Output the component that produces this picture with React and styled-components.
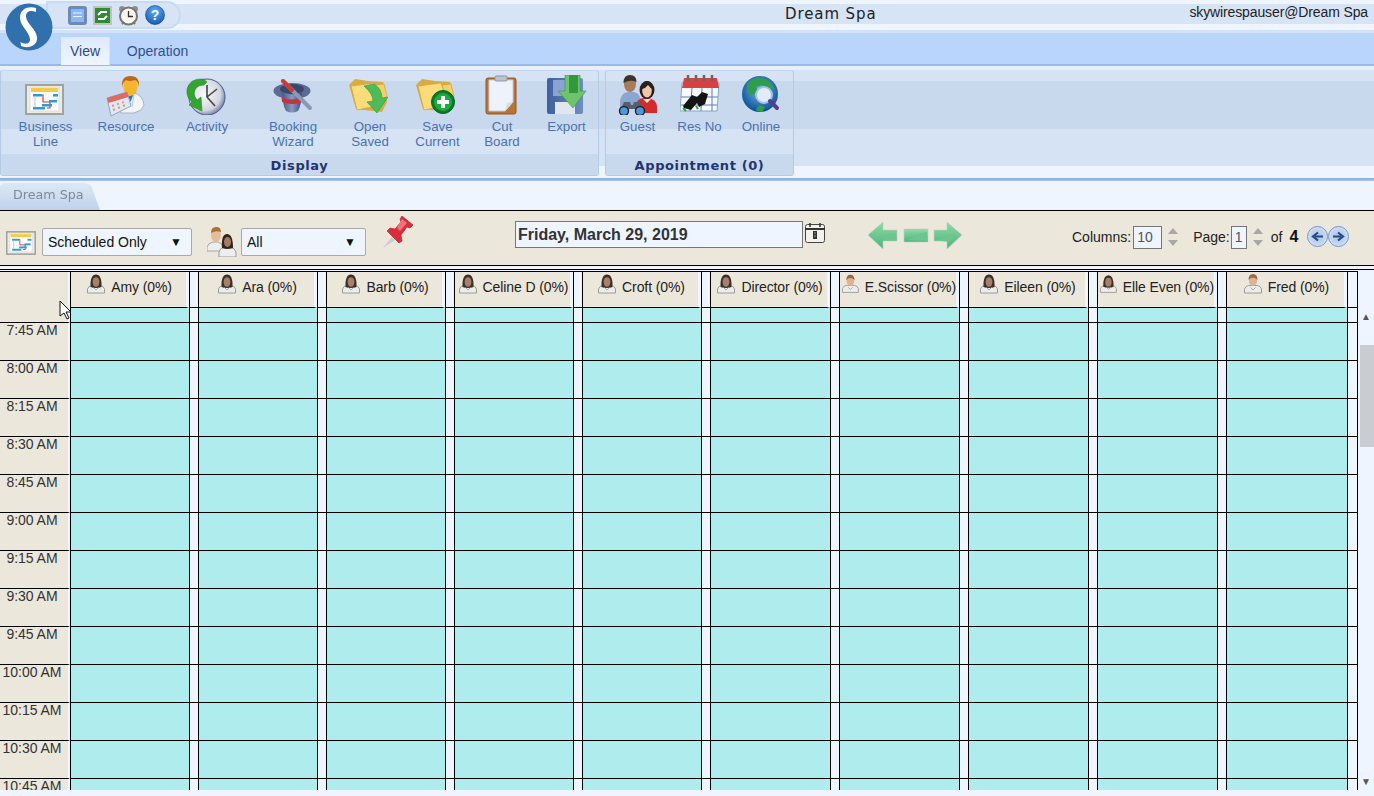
import React from "react";
import styled, { createGlobalStyle } from "styled-components";

const Global = createGlobalStyle`
  html, body { margin: 0; padding: 0; background: #eef5fe; }
  * { box-sizing: border-box; }
`;

const Page = styled.div`
  position: relative; width: 1374px; height: 796px; overflow: hidden;
  background: #eef5fe; font-family: "Liberation Sans", Arial, sans-serif; color: #222;
`;
const TitleBar = styled.div`
  height: 33px; position: relative; display: flex; align-items: center; justify-content: flex-end;
  background: linear-gradient(#eef5fe 0 4px, #d6e4f6 4px 24px, #eef5fe 24px 30px, #d3e2f8 30px 33px);
`;
const LogoMark = styled.div`position: absolute; left: 5px; top: 3px; width: 48px; height: 48px; z-index: 3;`;
const QuickBar = styled.div`
  position: absolute; left: 46px; top: 1px; width: 135px; height: 28px; padding-left: 20px;
  display: flex; align-items: center; gap: 6px;
  background: #d6e4f6; border: 2px solid #c9dbf3; border-radius: 0 14px 14px 0;
`;
const AppTitle = styled.div`
  position: absolute; left: 785px; top: 5px; font: 15px "DejaVu Sans", sans-serif; letter-spacing: .9px; color: #222;
`;
const UserName = styled.div`font-size: 14px; letter-spacing: -.12px; padding: 0 6px 10px 0; color: #222;`;
const TabStrip = styled.div`
  height: 33px; padding-left: 61px; display: flex; align-items: flex-end;
  background: #bad5fb; border-bottom: 2px solid #9ab9e6;
`;
const MenuTab = styled.div`
  height: ${p => (p.$active ? "28px" : "26px")}; width: ${p => p.$w}px; margin-right: ${p => p.$gap || 0}px;
  margin-bottom: ${p => (p.$active ? "-1px" : "0")};
  display: flex; align-items: center; justify-content: center; font-size: 14px; color: ${p => (p.$active ? "#2f4a80" : "#33508a")};
  background: ${p => (p.$active ? "linear-gradient(#dfeafb, #eef5fe)" : "transparent")};
  border-right: ${p => (p.$active ? "1px solid #d4e3f8" : "none")};
`;
const Ribbon = styled.div`
  height: 112px; padding: 4px 0 0; display: flex; gap: 6px;
  background: linear-gradient(#e6effa 0 4px, #d5e3f5 4px 15px, #c9d9ed 15px 63px, #d5e3f5 63px 100px, #eef5fd 100px);
`;
const Group = styled.div`
  width: ${p => p.$w}px; height: 106px; display: flex; flex-direction: column;
  border: 1px solid #b4cae6; border-top-color: #c3d5ec; border-radius: 3px;
  background: linear-gradient(#d5e3f5 0 10px, #c9d9ed 10px 58px, #d5e3f5 58px);
`;
const GroupItems = styled.div`flex: 1; display: flex;`;
const GroupLabel = styled.div`
  height: 21px; background: #c8d8ed; color: #1f3572; text-align: center;
  font: bold 13px/23px "DejaVu Sans", sans-serif; letter-spacing: .6px;
`;
const RibbonItem = styled.div`
  width: ${p => p.$w}px; display: flex; flex-direction: column; align-items: center;
  font-size: 13.3px; line-height: 15px; color: #4a72ae; text-align: center;
`;
const ItemIcon = styled.div`height: 48px; padding-top: 4px;`;
const IconOffset = styled.div`padding: ${p => p.$t}px ${p => p.$shift || 0}px 0 0;`;
const BlueRule = styled.div`height: 3px; background: linear-gradient(#8aa9d8, #a9c3ea);`;
const DocStrip = styled.div`height: 29px; padding-top: 2px; background: #eef5fe; filter: drop-shadow(0 0 .7px #8296b4);`;
const DocTab = styled.div`
  width: 100px; height: 27px; padding: 4px 0 0 13px; font: 12.7px "DejaVu Sans", sans-serif; color: #7b8a9c;
  background: linear-gradient(#dde8f6, #bfd2ea);
  clip-path: polygon(0 8%, 4% 0, 86% 0, 91% 8%, 100% 100%, 0 100%);
`;
const Toolbar = styled.div`
  height: 56px; display: flex; align-items: flex-start; background: #ebe7da;
  border-top: 1px solid #000; border-bottom: 1px solid #000;
`;
const ToolSlot = styled.div`margin: ${p => p.$top}px 0 0 ${p => p.$left}px; display: flex;`;
const SelectBox = styled.div`
  width: ${p => p.$w}px; height: 28px; padding: 0 9px 0 5px; display: flex; align-items: center; justify-content: space-between;
  background: #eef5fe; border: 1px solid #a9a9a9; border-radius: 2px; font-size: 14px; color: #111;
`;
const Caret = styled.span`font-size: 12px; color: #111;`;
const DateBox = styled.div`
  width: 288px; height: 27px; padding: 0 2px; display: flex; align-items: center; background: #eef5fe;
  border: 1px solid #767676; font: bold 16px "Liberation Sans", sans-serif; color: #333;
`;
const PagerLabel = styled.span`font-size: 14px; color: #222; line-height: 24px;`;
const NumBox = styled.div`
  width: ${p => p.$w}px; height: 23px; padding-left: 3px; background: #eef5fe; border: 1px solid #767676;
  font-size: 14px; line-height: 21px; color: #555;
`;
const BoldCount = styled.span`font-size: 16px; font-weight: bold; color: #111; line-height: 24px;`;
const Rule = styled.div`height: 4px; background: #eef5fe; border-bottom: 1px solid #000;`;
const ScheduleArea = styled.div`display: flex; height: 520px; padding-top: 1px; background: #eef5fe;`;
const Grid = styled.div`
  width: 1358px; height: 519px; overflow: hidden; display: grid; border-top: 1px solid #000; border-right: 1px solid #000;
  grid-template-columns: 70px 119px 9px 119px 9px 119px 9px 119px 9px 119px 9px 120px 9px 120px 9px 120px 9px 120px 9px 121px 10px;
  grid-auto-rows: min-content;
`;
const TimeHead = styled.div`height: ${p => p.$h}px; background: #ebe7da; border-right: 2px solid #eef5fe; border-bottom: ${p => (p.$line ? "1px solid #000" : "0")};`;
const TimeCell = styled.div`
  height: 38px; padding: 0 4px 0 0; text-align: center; font-size: 14px; letter-spacing: -.05px; line-height: 15px; color: #333;
  background: #ebe7da; border-right: 2px solid #eef5fe; border-bottom: 1px solid #000;
`;
const Head = styled.div`
  height: 36px; padding-left: 2px; border-left: 1px solid #000; border-bottom: 1px solid #000; border-right: 3px solid #eef5fe;
  background: #ebe7da; display: flex; justify-content: center; gap: 6px; font-size: 14px; letter-spacing: -.1px;
  white-space: nowrap; color: #222; line-height: 30px;
`;
const Slot = styled.div`height: ${p => p.$h}px; background: #aeecee; border-left: 1px solid #000; border-bottom: 1px solid #000;`;
const Spacer = styled.div`height: ${p => p.$h}px; background: #eef5fe; border-left: 1px solid #000; border-bottom: 1px solid #000;`;
const Scrollbar = styled.div`width: 16px; height: 519px; display: flex; flex-direction: column; align-items: center; padding-top: 42px;`;
const ScrollArrow = styled.div`font-size: 10px; line-height: 8px; color: #555; height: 8px;`;
const Thumb = styled.div`width: 14px; height: 102px; margin: 24px 0 331px 1px; background: #c9cdd2;`;
const Cursor = styled.div`position: absolute; left: 59px; top: 300px; z-index: 5;`;

const Person = ({ female }) => (
  <svg width="18" height="20" viewBox="0 0 18 20" style={{ marginTop: 2 }}>
    <path d="M.5 19v-4q1-3 4-3.500h9q3 .5 4 3.500v4z" fill="#ececec" stroke="#9c9c9c" />
    {female ? (
      <>
        <path d="M3.500 13Q3 .5 9 .5T14.500 13q-2 1-5.500 1t-5.500-1z" fill="#3b302c" />
        <ellipse cx="9" cy="8" rx="3.400" ry="4.800" fill="#a97f66" />
      </>
    ) : (
      <>
        <ellipse cx="9" cy="7" rx="4" ry="5" fill="#dfb392" />
        <path d="M4.500 6q0-6 4.500-6t4.500 6q-2-2.500-4.500-2.500T4.500 6z" fill="#9a6a45" />
      </>
    )}
    <path d="M6.500 13.500L9 16l2.500-2.500" fill="none" stroke="#aaa" />
  </svg>
);

const BusinessIcon = ({ w = 39, h = 31 }) => (
  <svg width={w} height={h} viewBox="0 0 39 31">
    <rect x="1" y="1" width="37" height="29" fill="#ebebe6" stroke="#a2a29c" strokeWidth="2" />
    <rect x="5" y="4" width="29" height="23" fill="#fff" stroke="#ddd" />
    <rect x="6" y="4" width="27" height="4" fill="#f5cd45" />
    <path d="M8 11h10v7h7v6h-3" fill="none" stroke="#d63a2b" strokeWidth="1.200" />
    <rect x="8" y="10" width="9" height="2.500" fill="#2f9ad8" />
    <rect x="24" y="16" width="8" height="2.500" fill="#2f9ad8" />
    <rect x="28" y="10" width="5" height="2.500" fill="#2f9ad8" />
    <rect x="17" y="20" width="10" height="2.500" fill="#2f9ad8" />
    <rect x="8" y="23" width="12" height="2.500" fill="#2f9ad8" />
    <path d="M10 12v11" stroke="#b9c2cc" />
  </svg>
);
const ResourceIcon = () => (
  <svg width="40" height="42" viewBox="0 0 40 42">
    <path d="M10 30q2-10 11-12h7q9 2 10 12l-3 5-7 3H15z" fill="#f2f5f8" stroke="#a8b3c0" />
    <path d="M21 18l3.500 9 3.500-9z" fill="#2f6fb3" />
    <path d="M28 20l-2 12M21 20l-1 9" stroke="#b9c4d2" />
    <path d="M17.500 11q0-9 7-9t7 9q0 9-7 10t-7-10z" fill="#f4b52f" />
    <path d="M16 12q-1-11 8.500-11T33 12q-1-6-4-7-6 2-9 0-3 2-4 7z" fill="#bc661d" />
    <path d="M1 22l20-6 4 14-20 10z" fill="#dfe8f6" stroke="#8fa5c6" transform="translate(0 1)" />
    <path d="M1 23l20-6 1.500 5L2.500 28z" fill="#df6a5d" />
    <path d="M6 31l2-.7m3-1l2-.7m3-1l2-.7M7 35l2-.8m3-1.200l2-.8m3-1.200l2-.8" stroke="#e59a6a" strokeWidth="2" />
  </svg>
);
const ActivityIcon = () => (
  <svg width="40" height="37" viewBox="0 0 40 37">
    <defs>
      <radialGradient id="clk" cx=".42" cy=".42" r=".7"><stop offset="0" stopColor="#fafafa" /><stop offset=".65" stopColor="#d2d6df" /><stop offset="1" stopColor="#3f4e80" /></radialGradient>
    </defs>
    <circle cx="21" cy="19" r="18" fill="url(#clk)" stroke="#4b5a85" />
    <path d="M21 7v12l8 9M21 19l10-8" fill="none" stroke="#444" strokeWidth="1.600" />
    <path d="M17 1Q4 0 1 11q-1 8 5 13l-3 3 13 6-1-14-4 3q-5-6-1-12 3-3 8-3l3-3z" fill="#37a332" stroke="#1f7a1c" strokeWidth=".5" />
  </svg>
);
const HatIcon = () => (
  <svg width="40" height="37" viewBox="0 0 40 37">
    <defs><linearGradient id="hat" x1="0" x2="1"><stop offset="0" stopColor="#475783" /><stop offset=".5" stopColor="#8a99c0" /><stop offset="1" stopColor="#3d4b75" /></linearGradient></defs>
    <ellipse cx="19" cy="13" rx="18.500" ry="8" fill="#5b6a95" />
    <ellipse cx="19" cy="11" rx="12" ry="5" fill="#39466e" />
    <path d="M9 14q1 15 4 19 6 3 12 0 3-4 4-19-10 5-20 0z" fill="url(#hat)" />
    <path d="M8.500 19q10 5 21 0l-.5 5q-10 4-20 0z" fill="#c6333a" />
    <path d="M10 3l27 27" stroke="#8d99b3" strokeWidth="4" strokeLinecap="round" />
    <path d="M10 3l9 9" stroke="#cf3a30" strokeWidth="4" strokeLinecap="round" />
  </svg>
);
const Folder = () => (
  <>
    <path d="M1 8l6-6 13 2 15 1 2 6 2 14-5 10L8 32z" fill="#d9aa45" />
    <path d="M3 9l23-3 8 22-25 5z" fill="#fadc78" stroke="#d0a241" strokeWidth=".7" />
    <path d="M27 8l9-1 3 12-6 6z" fill="#f5d066" stroke="#d0a241" strokeWidth=".7" />
  </>
);
const OpenIcon = () => (
  <svg width="40" height="37" viewBox="0 0 40 37">
    <Folder />
    <path d="M16 9l10-2q8 5 8 14l6-1-11 16-10-11 6-1q0-7-9-15z" fill="#4dbb58" stroke="#2e9a3d" strokeWidth=".6" />
  </svg>
);
const SaveIcon = () => (
  <svg width="40" height="37" viewBox="0 0 40 37">
    <Folder />
    <circle cx="28" cy="25" r="11.500" fill="#0c7a26" stroke="#063" />
    <circle cx="28" cy="25" r="9" fill="#1eaa3c" />
    <path d="M28 19v12M22 25h12" stroke="#fff" strokeWidth="4" />
  </svg>
);
const ClipIcon = () => (
  <svg width="32" height="40" viewBox="0 0 32 40">
    <rect x="1" y="3" width="30" height="36" rx="2" fill="#b9752f" stroke="#8f5a28" />
    <path d="M4 5h24v22l-8 9H4z" fill="#eef3fb" stroke="#c8ced8" />
    <path d="M20 36l2-8 6-1z" fill="#d8dee6" />
    <rect x="10" y="1" width="12" height="5" rx="1" fill="#bcc3cc" stroke="#8f97a3" />
  </svg>
);
const ExportIcon = () => (
  <svg width="40" height="40" viewBox="0 0 40 40">
    <defs><linearGradient id="fl" x1="0" x2="1"><stop offset="0" stopColor="#3f5f9c" /><stop offset="1" stopColor="#6d8ec6" /></linearGradient></defs>
    <rect x="0" y="3" width="36" height="36" rx="2" fill="url(#fl)" />
    <rect x="6" y="5" width="22" height="16" fill="#8aa3d2" />
    <rect x="8" y="27" width="20" height="12" fill="#dfe6ef" />
    <path d="M18 0h15v16h6L26 33 11 16h7z" fill="#70c36c" stroke="#2f9a3c" strokeWidth=".6" />
    <path d="M22 0h9v18h-9z" fill="#2f9a3c" />
  </svg>
);
const Binos = ({ x, y }) => (
  <g transform={`translate(${x} ${y})`}>
    <path d="M2 8l3-7h6l1 3h2l1-3h6l3 7z" fill="#56606c" />
    <circle cx="5" cy="10" r="4.500" fill="#4f97de" stroke="#222" strokeWidth="1.400" />
    <circle cx="21" cy="10" r="4.500" fill="#4f97de" stroke="#222" strokeWidth="1.400" />
  </g>
);
const GuestIcon = () => (
  <svg width="40" height="40" viewBox="0 0 40 40">
    <path d="M2 28q0-10 8-11h6q6 1 7 9v8H2z" fill="#8aa6d2" />
    <ellipse cx="12" cy="9" rx="6" ry="8" fill="#a97b58" />
    <path d="M5.500 8q0-8 6.500-8t6.500 7q-6-3-13 1z" fill="#3a3330" />
    <path d="M18 38v-8q1-6 7-7h5q8 1 9 8v7z" fill="#d22b2b" />
    <path d="M25 24l4 4 4-4z" fill="#f3e5d8" />
    <ellipse cx="29" cy="15" rx="7.500" ry="9" fill="#2b1e1a" />
    <ellipse cx="29" cy="16" rx="4.800" ry="6.500" fill="#f0c8a8" />
    <path d="M24 14q4-1 6-4 2 3 5 4-1-8-6-8t-5 8z" fill="#2b1e1a" />
    <Binos x="1" y="26" />
  </svg>
);
const ResNoIcon = () => (
  <svg width="40" height="40" viewBox="0 0 40 40">
    <path d="M2 8h37l-2 28H0z" fill="#f6f8fc" stroke="#8ea4c4" />
    <path d="M1 22h37M1 30h36M12 13l-2 23M22 13l-1 23M32 13v23" stroke="#5f82b2" />
    <path d="M4 3h33l2 10H2z" fill="#d94040" />
    <path d="M8 0v6M16 0v6M24 0v6M32 0v6" stroke="#666" strokeWidth="2.500" />
    <path d="M3 31l9-11 5 2 5-5 6 2-3 10-6 3-2-4-6 7-7-2z" fill="#141414" />
    <path d="M3 33l3 3M16 31l2 3" stroke="#2aa14a" strokeWidth="2" />
  </svg>
);
const OnlineIcon = () => (
  <svg width="40" height="38" viewBox="0 0 40 38">
    <defs><radialGradient id="gl" cx=".5" cy=".4" r=".6"><stop offset="0" stopColor="#6db5e8" /><stop offset="1" stopColor="#0d4f96" /></radialGradient></defs>
    <circle cx="19" cy="18" r="18" fill="url(#gl)" />
    <path d="M6 8q6-7 14-6l8 3 6 8-7-1-6-3-6 2 2 5-6 3-5-3zM18 29l6 2-3 5q-4 0-6-2z" fill="#2f9e4a" />
    <circle cx="23" cy="19" r="8" fill="#e2ecf8" stroke="#9dc3e8" strokeWidth="2" />
    <path d="M29 25l7 7" stroke="#5a3c8c" strokeWidth="4" strokeLinecap="round" />
  </svg>
);

const WindowIcon = () => (
  <svg width="19" height="19" viewBox="0 0 19 19">
    <rect x=".5" y=".5" width="18" height="18" rx="2" fill="#5b8fd4" stroke="#7d8797" />
    <rect x="3" y="3" width="13" height="13" fill="#8fb7ec" />
    <path d="M5 7h9M5 10.500h9" stroke="#e8f2fd" />
  </svg>
);
const SyncIcon = () => (
  <svg width="19" height="19" viewBox="0 0 19 19">
    <rect x="0" y="0" width="19" height="19" fill="#bfc3be" />
    <rect x="2" y="2" width="15" height="15" fill="#2f8a3a" />
    <path d="M14 6H8L5 9M5 13h6l3-3" fill="none" stroke="#fff" strokeWidth="2" />
  </svg>
);
const AlarmIcon = () => (
  <svg width="21" height="21" viewBox="0 0 21 21">
    <circle cx="4" cy="4" r="3" fill="#8f8f86" />
    <circle cx="17" cy="4" r="3" fill="#8f8f86" />
    <circle cx="10.500" cy="11" r="8.500" fill="#f8f6ee" stroke="#77766d" strokeWidth="2" />
    <path d="M10.500 6v5.500H15" fill="none" stroke="#333" strokeWidth="1.300" />
    <path d="M4 19l2-2m11 2l-2-2" stroke="#77766d" strokeWidth="2" />
  </svg>
);
const HelpIcon = () => (
  <svg width="20" height="20" viewBox="0 0 20 20">
    <defs><radialGradient id="hp" cx=".5" cy=".3" r=".8"><stop offset="0" stopColor="#5fb0f5" /><stop offset="1" stopColor="#0a4fb0" /></radialGradient></defs>
    <circle cx="10" cy="10" r="9.500" fill="url(#hp)" stroke="#123e80" strokeWidth=".6" />
    <text x="10" y="15" textAnchor="middle" fontSize="14" fontWeight="bold" fontFamily="Liberation Sans" fill="#fff">?</text>
  </svg>
);
const Logo = () => (
  <svg width="48" height="48" viewBox="0 0 48 48">
    <circle cx="24" cy="24" r="23.500" fill="#2f70ad" />
    <path d="M31 5C24 3 15 5 15 15c0 8 9 13 10 21 .5 5-5 6-9.500 3l.5 4c7 3 17 0 16-9-1-8-10-13-11-20-.5-6 5-7 10-5z" fill="#fff" />
  </svg>
);
const UsersIcon = () => (
  <svg width="30" height="30" viewBox="0 0 30 30">
    <path d="M0 24v-4q1-4 6-5h5q4 1 5 5v4z" fill="#eee" stroke="#a5a5a5" />
    <ellipse cx="9" cy="8" rx="5" ry="7" fill="#e6bd9b" />
    <path d="M4 6q0-6 5-6t5 5q-5-2-10 1z" fill="#a9703a" />
    <path d="M12 30v-5q1-4 5-5h6q5 1 6 5v5z" fill="#eee" stroke="#999" />
    <path d="M15 21Q14 7 20 7t6 14q-6 2-11 0z" fill="#2e2622" />
    <ellipse cx="20.500" cy="15" rx="3.500" ry="5" fill="#a87a60" />
  </svg>
);
const PinIcon = () => (
  <svg width="30" height="32" viewBox="0 0 30 32">
    <path d="M0 32l9-11 3 3z" fill="#c9ccd2" />
    <path d="M19 0l11 9-3 3-3-1-6 8 1 6-3 2L4 15l3-3 5 1 6-7-1-3z" fill="#dc2b3a" stroke="#a81c28" strokeWidth=".6" />
    <path d="M19 3l5 4-7 8-3-3z" fill="#f0727c" />
  </svg>
);
const CalIcon = () => (
  <svg width="20" height="20" viewBox="0 0 20 20">
    <rect x=".5" y="1.500" width="19" height="18" rx="2" fill="#f2f1ea" stroke="#444" />
    <path d="M0 6h20" stroke="#333" strokeWidth="2" />
    <path d="M5 0v4M15 0v4" stroke="#333" strokeWidth="1.500" />
    <path d="M8 8h4v8H8z" fill="#333" />
    <path d="M9.500 10h1M9.500 13h1" stroke="#fff" />
  </svg>
);
const NavArrows = () => (
  <svg width="94" height="30" viewBox="0 0 94 30">
    <defs><linearGradient id="na" x1="0" y1="0" x2="0" y2="1"><stop offset="0" stopColor="#8fdaa4" /><stop offset="1" stopColor="#4cb47b" /></linearGradient></defs>
    <path d="M0 14L15 1v8h14v11H15v8z" fill="url(#na)" stroke="#c4ccc6" strokeWidth=".6" />
    <path d="M16 15q7-4 12-2v6H15z" fill="#6cc58c" />
    <rect x="36" y="8" width="24" height="13" fill="url(#na)" stroke="#c4ccc6" strokeWidth=".6" />
    <path d="M37 19q10-1 13-6l9-2v9z" fill="#6cc58c" />
    <path d="M94 14L79 1v8H66v11h13v8z" fill="url(#na)" stroke="#c4ccc6" strokeWidth=".6" />
    <path d="M67 19q9-1 14-6l7 2-7 6z" fill="#6cc58c" />
  </svg>
);
const Spin = () => (
  <svg width="10" height="20" viewBox="0 0 10 20">
    <path d="M5 1l5 6H0z" fill="#a8a8a8" />
    <path d="M5 19l5-6H0z" fill="#a8a8a8" />
  </svg>
);
const RoundNav = ({ dir }) => (
  <svg width="21" height="21" viewBox="0 0 21 21">
    <defs><radialGradient id="rn" cx=".5" cy=".5" r=".55"><stop offset="0" stopColor="#a9c4ea" /><stop offset=".7" stopColor="#c3d6f0" /><stop offset="1" stopColor="#e6eefa" /></radialGradient></defs>
    <circle cx="10.500" cy="10.500" r="10" fill="url(#rn)" stroke="#7094cc" />
    <path d={dir === "l" ? "M16 10.500H8M11 6.500l-5 4 5 4" : "M5 10.500h8M10 6.500l5 4-5 4"} fill="none" stroke="#2b4a80" strokeWidth="2.200" />
  </svg>
);
const CursorIcon = () => (
  <svg width="13" height="21" viewBox="0 0 13 21">
    <path d="M1 1v15l4-3 3 6 2-1-3-6h5z" fill="#fff" stroke="#111" strokeWidth="1" />
  </svg>
);

const display = [
  [89, ["Business", "Line"], <BusinessIcon key="a" />, 9, 2],
  [72, ["Resource"], <ResourceIcon key="b" />, 0, 0],
  [90, ["Activity"], <ActivityIcon key="c" />, 3, 2],
  [82, ["Booking", "Wizard"], <HatIcon key="d" />, 3, 0],
  [72, ["Open", "Saved"], <OpenIcon key="e" />, 2, 4],
  [63, ["Save", "Current"], <SaveIcon key="f" />, 2, 6],
  [66, ["Cut", "Board"], <ClipIcon key="g" />, 0, 2],
  [63, ["Export"], <ExportIcon key="h" />, 0, 0],
];
const appt = [
  [63, ["Guest"], <GuestIcon key="a" />, 0, 0],
  [61, ["Res No"], <ResNoIcon key="b" />, 0, 0],
  [62, ["Online"], <OnlineIcon key="c" />, 1, 0],
];
const people = [
  ["Amy", 1], ["Ara", 1], ["Barb", 1], ["Celine D", 1], ["Croft", 1],
  ["Director", 1], ["E.Scissor", 0], ["Eileen", 1], ["Elle Even", 1], ["Fred", 0],
];
const times = ["7:45 AM", "8:00 AM", "8:15 AM", "8:30 AM", "8:45 AM", "9:00 AM", "9:15 AM", "9:30 AM", "9:45 AM", "10:00 AM", "10:15 AM", "10:30 AM", "10:45 AM"];

const renderItems = list =>
  list.map(([w, lines, icon, t, shift]) => (
    <RibbonItem $w={w} key={lines[0]}>
      <ItemIcon><IconOffset $t={t} $shift={shift}>{icon}</IconOffset></ItemIcon>
      {lines.map(l => <span key={l}>{l}</span>)}
    </RibbonItem>
  ));

export default function App() {
  return (
    <Page>
      <Global />
      <TitleBar>
        <LogoMark><Logo /></LogoMark>
        <QuickBar><WindowIcon /><SyncIcon /><AlarmIcon /><HelpIcon /></QuickBar>
        <AppTitle>Dream Spa</AppTitle>
        <UserName>skywirespauser@Dream Spa</UserName>
      </TitleBar>
      <TabStrip>
        <MenuTab $active $w={49} $gap={2}>View</MenuTab>
        <MenuTab $w={91}>Operation</MenuTab>
      </TabStrip>
      <Ribbon>
        <Group $w={599}>
          <GroupItems>{renderItems(display)}</GroupItems>
          <GroupLabel>Display</GroupLabel>
        </Group>
        <Group $w={189}>
          <GroupItems>{renderItems(appt)}</GroupItems>
          <GroupLabel>Appointment (0)</GroupLabel>
        </Group>
      </Ribbon>
      <BlueRule />
      <DocStrip><DocTab>Dream Spa</DocTab></DocStrip>
      <Toolbar>
        <ToolSlot $left={6} $top={19}><BusinessIcon w={30} h={26} /></ToolSlot>
        <ToolSlot $left={6} $top={17}>
          <SelectBox $w={150}>Scheduled Only<Caret>▼</Caret></SelectBox>
        </ToolSlot>
        <ToolSlot $left={15} $top={16}><UsersIcon /></ToolSlot>
        <ToolSlot $left={4} $top={17}>
          <SelectBox $w={125}>All<Caret>▼</Caret></SelectBox>
        </ToolSlot>
        <ToolSlot $left={17} $top={5}><PinIcon /></ToolSlot>
        <ToolSlot $left={102} $top={10}><DateBox>Friday, March 29, 2019</DateBox></ToolSlot>
        <ToolSlot $left={2} $top={12}><CalIcon /></ToolSlot>
        <ToolSlot $left={43} $top={10}><NavArrows /></ToolSlot>
        <ToolSlot $left={110} $top={14}><PagerLabel>Columns:</PagerLabel></ToolSlot>
        <ToolSlot $left={2} $top={15}><NumBox $w={29}>10</NumBox></ToolSlot>
        <ToolSlot $left={6} $top={16}><Spin /></ToolSlot>
        <ToolSlot $left={15} $top={14}><PagerLabel>Page:</PagerLabel></ToolSlot>
        <ToolSlot $left={1} $top={15}><NumBox $w={16}>1</NumBox></ToolSlot>
        <ToolSlot $left={6} $top={16}><Spin /></ToolSlot>
        <ToolSlot $left={8} $top={14}><PagerLabel>of</PagerLabel></ToolSlot>
        <ToolSlot $left={7} $top={14}><BoldCount>4</BoldCount></ToolSlot>
        <ToolSlot $left={9} $top={15}><RoundNav dir="l" /></ToolSlot>
        <ToolSlot $left={0} $top={15}><RoundNav dir="r" /></ToolSlot>
      </Toolbar>
      <Rule />
      <ScheduleArea>
        <Grid>
          <TimeHead $h={36} />
          {people.map(([name, female]) => (
            <React.Fragment key={name}>
              <Head>
                <Person female={female} />
                <span>{name} (0%)</span>
              </Head>
              <Spacer $h={36} />
            </React.Fragment>
          ))}
          <TimeHead $h={15} $line />
          {people.map(([name]) => (
            <React.Fragment key={name}>
              <Slot $h={15} />
              <Spacer $h={15} />
            </React.Fragment>
          ))}
          {times.map(t => (
            <React.Fragment key={t}>
              <TimeCell>{t}</TimeCell>
              {people.map(([name]) => (
                <React.Fragment key={name}>
                  <Slot $h={38} />
                  <Spacer $h={38} />
                </React.Fragment>
              ))}
            </React.Fragment>
          ))}
        </Grid>
        <Scrollbar>
          <ScrollArrow>▲</ScrollArrow>
          <Thumb />
          <ScrollArrow>▼</ScrollArrow>
        </Scrollbar>
      </ScheduleArea>
      <Cursor><CursorIcon /></Cursor>
    </Page>
  );
}
